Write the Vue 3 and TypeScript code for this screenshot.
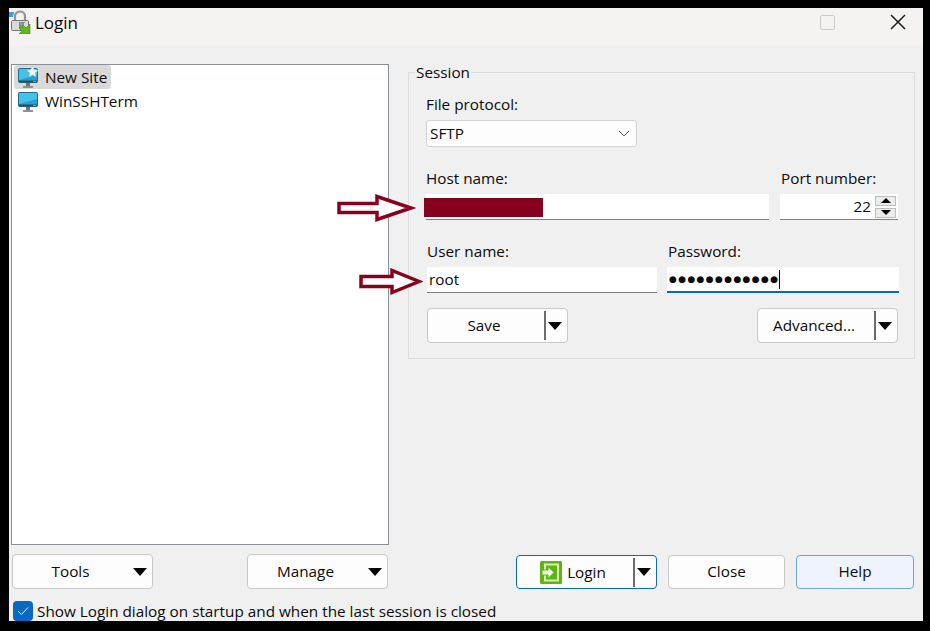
<script setup lang="ts">
const sites: { name: string; star: boolean }[] = [
  { name: 'New Site', star: true },
  { name: 'WinSSHTerm', star: false },
]
</script>

<template>
  <div class="page">
    <div class="window">
      <header class="titlebar">
        <svg class="app-icon" width="22" height="24" viewBox="0 0 22 24">
          <path d="M0 2h5l-1 5H0z" fill="#3aa0dc" />
          <path d="M6 11V6a5 4.500 0 0 1 10 0v5" fill="none" stroke="#8d9399" stroke-width="2.200" />
          <rect x="2.500" y="10.500" width="17" height="10" rx="1" fill="#d9dbd8" stroke="#6f7478" />
          <path d="M10 12l5 4v-3h1v-1zM10 12v6h6l-2-2z" fill="#3d3f42" opacity=".5" />
          <path d="M21 24H10l3-3-3-3 4-3 3 3 4-4z" fill="#62b61e" stroke="#3f8a10" stroke-width=".6" />
        </svg>
        <span class="title">Login</span>
        <span class="win-max"></span>
        <svg class="win-close" width="16" height="16" viewBox="0 0 16 16">
          <path d="M1 1l14 14M15 1L1 15" stroke="#1a1a1a" stroke-width="1.500" fill="none" />
        </svg>
      </header>

      <main class="body">
        <section class="left">
          <div class="tree">
            <div v-for="site in sites" :key="site.name" class="tree-row" :class="{ selected: site.star }">
              <svg width="21" height="23" viewBox="0 0 21 23" class="monitor">
                <rect x="0.500" y="2.500" width="19" height="14" rx="1" fill="#1fa2d6" stroke="#16708f" />
                <path d="M1 3h18v6L1 14z" fill="#45c0e8" />
                <rect x="1" y="14.500" width="18" height="2" fill="#3a4a52" />
                <rect x="15" y="15" width="3" height="1" fill="#4fd05a" />
                <rect x="8" y="17" width="4" height="3" fill="#6e7579" />
                <rect x="5" y="20" width="10" height="2" fill="#8c9296" />
                <path v-if="site.star" d="M14.500 0l1.700 3.800 4.100.4-3.100 2.700.9 4-3.600-2.100-3.600 2.100.9-4-3.100-2.700 4.100-.4z" fill="#f4f6f8" stroke="#aeb6bc" stroke-width=".5" />
              </svg>
              <span class="tree-label">{{ site.name }}</span>
            </div>
          </div>
          <div class="left-buttons">
            <button class="btn menu-btn"><span class="grow">Tools</span><i class="tri"></i></button>
            <button class="btn menu-btn"><span class="grow">Manage</span><i class="tri"></i></button>
          </div>
          <label class="startup">
            <span class="check">
              <svg width="12" height="10" viewBox="0 0 12 10"><path d="M1 5l3.500 3.500L11 1.500" fill="none" stroke="#fff" stroke-width="1" /></svg>
            </span>
            Show Login dialog on startup and when the last session is closed
          </label>
        </section>

        <section class="right">
          <fieldset class="group">
            <legend>Session</legend>
            <div class="field protocol">
              <span class="lbl">File protocol:</span>
              <div class="select">
                <span>SFTP</span>
                <svg width="12" height="7" viewBox="0 0 12 7"><path d="M1 1l5 5 5-5" fill="none" stroke="#555" stroke-width="1" /></svg>
              </div>
            </div>
            <div class="row host-row">
              <div class="field host">
                <span class="lbl">Host name:</span>
                <div class="input">
                  <span class="redacted"></span>
                </div>
                <svg class="arrow arrow-host" width="80" height="28" viewBox="0 0 80 28">
                  <path d="M2 9.500h38V2.500L74 14 40 25.500v-7H2z" fill="#fff" stroke="#87001e" stroke-width="3.500" />
                </svg>
              </div>
              <div class="field port">
                <span class="lbl">Port number:</span>
                <div class="input num">
                  <span>22</span>
                  <div class="spin">
                    <span class="spin-btn"><i class="up"></i></span>
                    <span class="spin-btn"><i class="down"></i></span>
                  </div>
                </div>
              </div>
            </div>
            <div class="row cred-row">
              <div class="field user">
                <span class="lbl">User name:</span>
                <div class="input"><span>root</span></div>
                <svg class="arrow arrow-user" width="64" height="28" viewBox="0 0 64 28">
                  <path d="M2 8.500h31v-6l27 11-27 11v-6H2z" fill="#fff" stroke="#87001e" stroke-width="3.500" />
                </svg>
              </div>
              <div class="field pass">
                <span class="lbl">Password:</span>
                <div class="input focused"><span class="dots">●●●●●●●●●●●●</span><i class="caret"></i></div>
              </div>
            </div>
            <div class="row action-row">
              <button class="btn split"><span class="grow">Save</span><i class="sep"></i><i class="tri"></i></button>
              <button class="btn split"><span class="grow">Advanced...</span><i class="sep"></i><i class="tri"></i></button>
            </div>
          </fieldset>

          <div class="right-buttons">
            <button class="btn split login">
              <span class="grow login-label">
                <svg width="22" height="23" viewBox="0 0 22 23">
                  <rect width="22" height="23" rx="1.500" fill="#5fb312" />
                  <rect x="5" y="3.500" width="13" height="16" fill="none" stroke="#d6f0b0" stroke-width="2" />
                  <path d="M2 9h6V5.500l6 6-6 6V14H2z" fill="#f2fbe4" stroke="#5fb312" stroke-width="1" />
                </svg>
                Login
              </span>
              <i class="sep"></i><i class="tri"></i>
            </button>
            <button class="btn close"><span class="lift">Close</span></button>
            <button class="btn help"><span class="lift">Help</span></button>
          </div>
        </section>
      </main>
    </div>
  </div>
</template>

<style>
html, body { margin: 0; background: #000; }
</style>

<style scoped>
.page {
  width: 930px;
  height: 631px;
  box-sizing: border-box;
  padding: 8px 7px 10px 9px;
  background: #000;
  font-family: "Open Sans", "Noto Sans", sans-serif;
  font-size: 15.3px;
  color: #0a0a0a;
  overflow: hidden;
}
.window { height: 100%; background: #f0f0f0; display: flex; flex-direction: column; overflow: hidden; }
.titlebar {
  height: 37px;
  box-sizing: border-box;
  padding-bottom: 9px;
  flex: none;
  background: #f5f2f1;
  display: flex;
  align-items: center;
}
.title { margin-left: 4px; font-size: 17px; flex: 1; }
.win-max { width: 13px; height: 13px; border: 1.500px solid #ccc9c8; border-radius: 2px; margin-right: 55px; }
.win-close { margin-right: 17px; }

.body { flex: 1; display: flex; min-height: 0; padding-left: 2px; }
.left { width: 378px; flex: none; padding-top: 19px; display: flex; flex-direction: column; }
.tree {
  height: 481px;
  box-sizing: border-box;
  background: #fff;
  border: 1px solid #8a8f99;
  padding: 0 0 0 2px;
}
.tree-row { height: 24px; width: fit-content; display: flex; align-items: center; gap: 6px; padding: 0 4px; border-radius: 3px; }
.tree-row.selected { background: #d9d9d9; }
.monitor { flex: none; margin-top: 1px; }
.tree-label { line-height: 21px; }
.left-buttons { display: flex; justify-content: space-between; margin-top: 9px; padding: 0 1px; }
.left-buttons .btn { width: 141px; }

.btn {
  height: 35px;
  box-sizing: border-box;
  border: 1px solid #c9c9c9;
  border-radius: 4px;
  background: #fdfdfd;
  font: inherit;
  color: inherit;
  padding: 0;
  display: flex;
  align-items: center;
  justify-content: center;
}
.grow { flex: 1; text-align: center; padding-bottom: 2px; }
.lift { padding-bottom: 2px; }
.tri {
  flex: none;
  width: 0;
  height: 0;
  border-left: 7.500px solid transparent;
  border-right: 7.500px solid transparent;
  border-top: 8px solid #000;
}
.menu-btn .tri { margin-right: 5px; }
.menu-btn .grow { padding-right: 5px; }
.sep { flex: none; width: 1.500px; height: 29px; background: #6b6b6b; margin-right: 2.500px; }
.split .tri { margin-right: 5px; }
.split .grow { padding-right: 4px; }

.startup { display: flex; align-items: center; gap: 4px; margin-top: 12px; margin-left: 2px; height: 20px; white-space: nowrap; }
.check {
  width: 20px;
  height: 20px;
  flex: none;
  border-radius: 4px;
  background: #0a67c2;
  display: flex;
  align-items: center;
  justify-content: center;
}

.right { margin-left: 19px; width: 507px; flex: none; display: flex; flex-direction: column; padding-top: 27px; position: relative; }
.group {
  margin: 0;
  height: 287px;
  box-sizing: border-box;
  border: 1px solid #dcdcdc;
  padding: 20px 16px 0 17px;
  min-width: 0;
  position: relative;
}
.group legend { padding: 0 1px; margin-left: 6px; line-height: 1; position: absolute; top: -8px; left: 0; background: #f0f0f0; }
.field { display: flex; flex-direction: column; position: relative; }
.lbl { line-height: 22px; height: 22px; }
.protocol { width: 211px; }
.select {
  height: 27px;
  box-sizing: border-box;
  background: #fdfdfd;
  border: 1px solid #d2d2d2;
  border-radius: 3px;
  display: flex;
  align-items: center;
  justify-content: space-between;
  padding: 0 6px 1px 3px;
  margin-top: 5px;
}
.row { display: flex; }
.host-row { margin-top: 20px; justify-content: space-between; width: 472px; }
.host { width: 343px; }
.port { width: 118px; }
.port .lbl { padding-left: 1px; }
.input {
  height: 26px;
  margin-top: 5px;
  box-sizing: border-box;
  background: #fff;
  border-bottom: 1px solid #7f7f7f;
  display: flex;
  align-items: center;
  padding: 0 2px;
  position: relative;
}
.input > span:not(.redacted):not(.dots) { padding-bottom: 2px; }
.redacted { position: absolute; left: -2px; top: 4px; width: 119px; height: 19px; background: #87001e; }
.arrow { position: absolute; }
.arrow-host { left: -89px; top: 27px; }
.arrow-user { left: -68px; top: 28px; }
.num { justify-content: flex-end; gap: 4px; padding-right: 2px; }
.spin { display: flex; flex-direction: column; gap: 2px; }
.spin-btn { width: 21px; height: 10px; box-sizing: border-box; border: 1px solid #bdbdbd; background: #ececec; display: flex; align-items: center; justify-content: center; }
.up { width: 0; height: 0; border-left: 5px solid transparent; border-right: 5px solid transparent; border-bottom: 5px solid #000; }
.down { width: 0; height: 0; border-left: 5px solid transparent; border-right: 5px solid transparent; border-top: 5px solid #000; }
.cred-row { margin-top: 20px; width: 473px; justify-content: space-between; }
.user { width: 230px; margin-left: 1px; }
.pass { width: 232px; }
.pass .lbl { padding-left: 1px; }
.focused { border-bottom: 2px solid #0a67c2; }
.dots { font-family: "DejaVu Sans", sans-serif; font-size: 9px; letter-spacing: 1.350px; line-height: 1; }
.caret { width: 1px; height: 19px; background: #000; margin-left: 0; }
.action-row { margin-top: 15px; margin-left: 1px; width: 471px; justify-content: space-between; }
.action-row .btn { width: 141px; }

.right-buttons { display: flex; margin-top: 196px; margin-left: 108px; }
.right-buttons .btn { height: 34px; }
.login { width: 141px; border-color: #0a67c2; border-width: 1.500px; }
.login-label { display: flex; align-items: center; justify-content: center; gap: 5px; padding-bottom: 0; }
.close { width: 117px; margin-left: 11px; }
.help { width: 118px; margin-left: 11px; background: #eff4fc; border-color: #6ea3d8; }
</style>
